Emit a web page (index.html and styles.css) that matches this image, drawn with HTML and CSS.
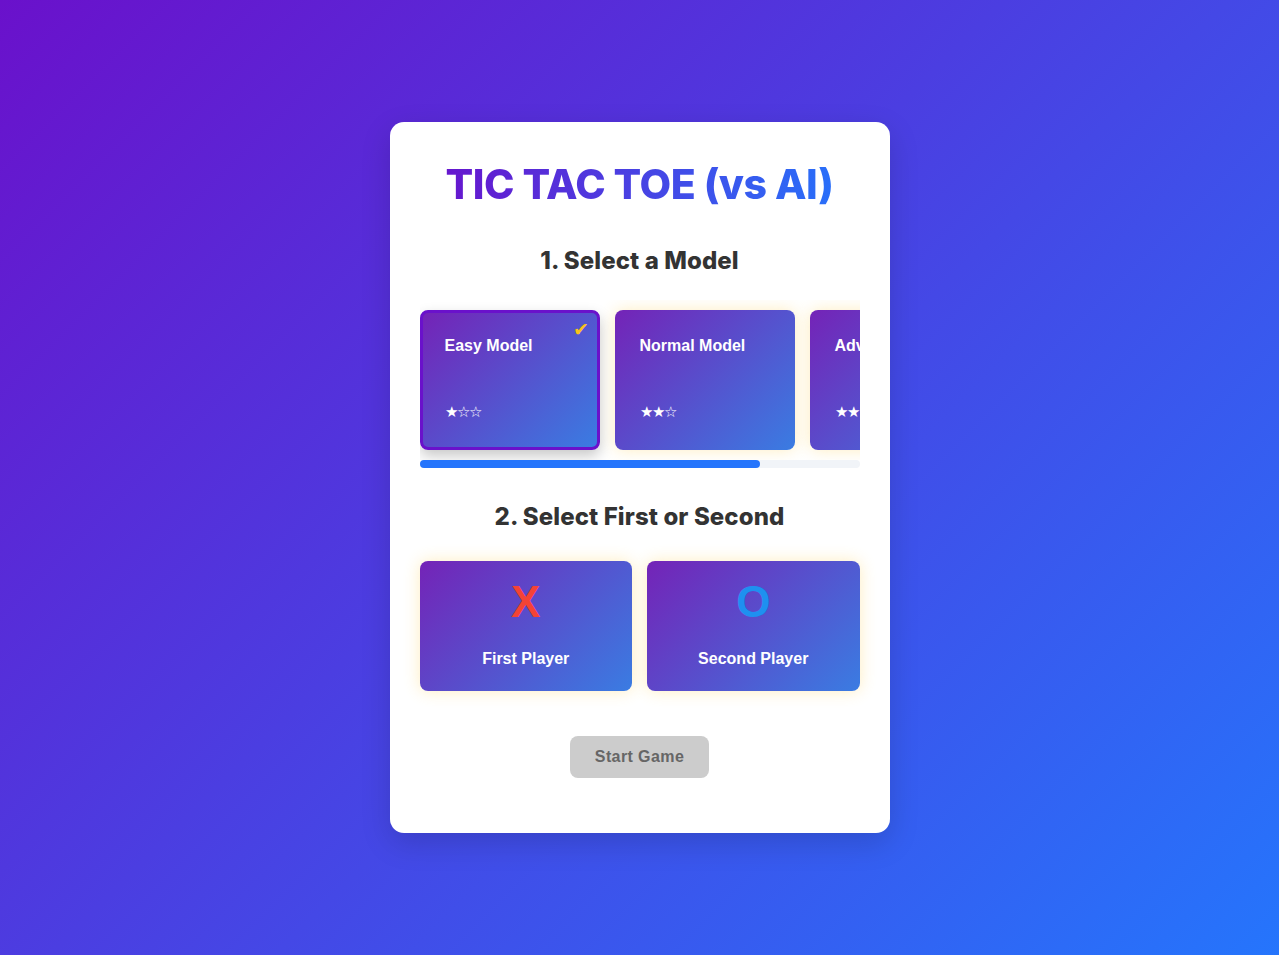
FILE: index.html
```html
<!DOCTYPE html>
<html lang="en">
<head>
<meta charset="utf-8">
<title>Tic Tac Toe (vs AI)</title>
<link rel="stylesheet" href="styles.css">
</head>
<body>
<div class="panel">
  <h1 class="title">TIC TAC TOE (vs AI)</h1>
  <h2 class="step">1. Select a Model</h2>
  <div class="models">
    <div class="model selected">
      <span class="check">✔</span>
      <div class="model-name">Easy Model</div>
      <div class="stars">★☆☆</div>
    </div>
    <div class="model">
      <div class="model-name">Normal Model</div>
      <div class="stars">★★☆</div>
    </div>
    <div class="model">
      <div class="model-name">Advanced Model</div>
      <div class="stars">★★★</div>
    </div>
  </div>
  <div class="scroll-track"><div class="scroll-thumb"></div></div>
  <h2 class="step step-two">2. Select First or Second</h2>
  <div class="players">
    <div class="player">
      <div class="mark mark-x">X</div>
      <div class="player-name">First Player</div>
    </div>
    <div class="player">
      <div class="mark mark-o">O</div>
      <div class="player-name">Second Player</div>
    </div>
  </div>
  <div class="actions">
    <button class="start">Start Game</button>
  </div>
</div>
</body>
</html>
```
FILE: styles.css
```css
html, body {
  margin: 0;
  padding: 0;
  height: 100%;
}
body {
  background: linear-gradient(135deg, #6a11cb 0%, #2575fc 100%);
  font-family: "Liberation Sans", Arial, sans-serif;
  display: flex;
  justify-content: center;
  align-items: flex-start;
  min-height: 955px;
}
.panel {
  margin-top: 122px;
  width: 500px;
  box-sizing: border-box;
  background: #fff;
  border-radius: 14px;
  padding: 32px 30px 55px;
  box-shadow: 0 10px 30px rgba(0, 0, 0, 0.15);
}
.title {
  margin: 0;
  text-align: center;
  font-family: Inter, "Open Sans", sans-serif;
  font-weight: 800;
  font-size: 41px;
  line-height: 60px;
  letter-spacing: -0.5px;
  background: linear-gradient(90deg, #6a11cb, #2575fc);
  -webkit-background-clip: text;
  background-clip: text;
  color: transparent;
}
.step {
  margin: 32px 0 0;
  text-align: center;
  font-family: Inter, "Open Sans", sans-serif;
  font-weight: 800;
  font-size: 24px;
  line-height: 30px;
  letter-spacing: 0.1px;
  color: #333;
}
.models {
  margin-top: 24px;
  display: flex;
  gap: 15px;
  overflow: hidden;
  padding: 10px 0;
}
.scroll-track {
  height: 8px;
  border-radius: 4px;
  background: #f1f4f8;
}
.scroll-thumb {
  width: 340px;
  height: 8px;
  border-radius: 4px;
  background: #2575fc;
}
.model {
  position: relative;
  flex: 0 0 180px;
  height: 140px;
  box-sizing: border-box;
  border-radius: 8px;
  padding: 26px 25px 29px;
  background: linear-gradient(135deg, #7423b7, #3a7ce2);
  color: #fff;
  display: flex;
  flex-direction: column;
  justify-content: space-between;
  box-shadow: 0 0 16px rgba(255, 200, 60, 0.32);
}
.model.selected {
  border: 3px solid #6a11cb;
  padding: 23px 22px 26px;
  box-shadow: 0 6px 14px rgba(0, 0, 0, 0.22);
}
.model-name {
  font-weight: bold;
  font-size: 16px;
  line-height: 20px;
  white-space: nowrap;
}
.stars {
  font-size: 15px;
  line-height: 18px;
  letter-spacing: -1px;
}
.check {
  position: absolute;
  top: 6px;
  right: 8px;
  color: #f8c21b;
  font-size: 19px;
  line-height: 22px;
}
.step-two {
  margin-top: 34px;
}
.players {
  margin-top: 29px;
  display: flex;
  gap: 15px;
}
.player {
  flex: 1;
  height: 130px;
  box-sizing: border-box;
  border-radius: 8px;
  background: linear-gradient(135deg, #7423b7, #3a7ce2);
  box-shadow: 0 0 16px rgba(255, 200, 60, 0.32);
  display: flex;
  flex-direction: column;
  align-items: center;
  padding-top: 18px;
}
.mark {
  font-weight: bold;
  font-size: 44px;
  line-height: 46px;
}
.mark-x {
  color: #f44336;
}
.mark-o {
  color: #1e90f0;
}
.player-name {
  margin-top: 24px;
  color: #fff;
  font-weight: bold;
  font-size: 16px;
  line-height: 20px;
}
.actions {
  margin-top: 45px;
  display: flex;
  justify-content: center;
}
.start {
  border: none;
  background: #cccccc;
  color: #666;
  font-family: "Liberation Sans", Arial, sans-serif;
  font-weight: bold;
  font-size: 16px;
  letter-spacing: 0.4px;
  padding: 0 25px;
  height: 42px;
  border-radius: 8px;
}
```
